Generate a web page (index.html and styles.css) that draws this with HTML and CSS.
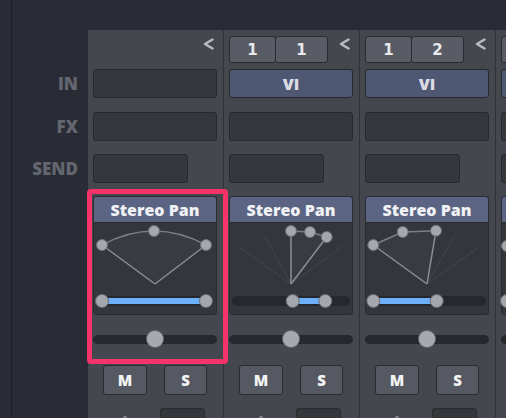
FILE: index.html
```html
<!DOCTYPE html>
<html>
<head>
<meta charset="utf-8">
<link rel="stylesheet" href="styles.css">
</head>
<body>
<div class="app">
  <div class="rail"></div>
  <div class="labels">
    <div class="lab lab-in">IN</div>
    <div class="lab lab-fx">FX</div>
    <div class="lab lab-send">SEND</div>
  </div>
  <div class="strips">
    <!-- channel 1 -->
    <div class="strip strip-sel">
      <div class="top">
        <svg class="chev" width="11" height="12" viewBox="0 0 11 12"><polyline points="9.5,1.5 2,6 9.5,10.5"/></svg>
      </div>
      <div class="slot slot-in"></div>
      <div class="slot slot-fx"></div>
      <div class="slot slot-send"></div>
      <div class="pan-head">Stereo Pan</div>
      <div class="pan-panel">
        <svg class="pan-svg" width="124" height="93" viewBox="0 0 124 93">
          <g class="fan"><line x1="62" y1="62" x2="9" y2="23"/><line x1="62" y1="62" x2="35" y2="12.5"/><line x1="62" y1="62" x2="61" y2="9"/><line x1="62" y1="62" x2="87" y2="12.5"/><line x1="62" y1="62" x2="113" y2="23"/></g>
          <path class="sector" d="M62 62 L9 23 Q61 -5 113 23 Z"/>
          <path class="arc" d="M9 23 Q61 -5 113 23"/>
          <line class="edge" x1="62" y1="62" x2="9" y2="23"/>
          <line class="edge" x1="62" y1="62" x2="113" y2="23"/>
          <rect class="wtrack" x="3" y="74" width="118" height="10" rx="5"/>
          <rect class="wbar" x="9" y="76" width="104" height="6"/>
          <circle class="node" cx="9" cy="23" r="5.5"/>
          <circle class="node" cx="61" cy="9" r="5.5"/>
          <circle class="node" cx="113" cy="23" r="5.5"/>
          <circle class="wknob" cx="9" cy="79" r="6.5"/>
          <circle class="wknob" cx="113" cy="79" r="6.5"/>
        </svg>
      </div>
      <div class="pan"><div class="track"><div class="knob"></div></div></div>
      <div class="ms"><div class="btn btn-m">M</div><div class="btn btn-s">S</div></div>
      <div class="foot"><div class="foot-dot"></div><div class="foot-box"></div></div>
      <div class="frame"></div>
    </div>
    <!-- channel 2 -->
    <div class="strip">
      <div class="top">
        <div class="seg-group"><div class="seg seg-a">1</div><div class="seg seg-b">1</div></div>
        <svg class="chev" width="11" height="12" viewBox="0 0 11 12"><polyline points="9.5,1.5 2,6 9.5,10.5"/></svg>
      </div>
      <div class="slot slot-in slot-vi">VI</div>
      <div class="slot slot-fx"></div>
      <div class="slot slot-send"></div>
      <div class="pan-head">Stereo Pan</div>
      <div class="pan-panel">
        <svg class="pan-svg" width="124" height="93" viewBox="0 0 124 93">
          <g class="fan"><line x1="62" y1="62" x2="9" y2="24"/><line x1="62" y1="62" x2="35" y2="13"/><line x1="62" y1="62" x2="61" y2="9"/><line x1="62" y1="62" x2="88" y2="13"/><line x1="62" y1="62" x2="114" y2="24"/></g>
          <path class="sector" d="M62 62 L62 9 L81 10 L97.7 15 Z"/>
          <polyline class="arc" points="62,9 81,10 97.7,15"/>
          <line class="edge" x1="62" y1="62" x2="62" y2="9"/>
          <line class="edge" x1="62" y1="62" x2="97.7" y2="15"/>
          <rect class="wtrack" x="3" y="74" width="118" height="10" rx="5"/>
          <rect class="wbar" x="63.7" y="76" width="32.6" height="6"/>
          <circle class="node" cx="62" cy="9" r="5.5"/>
          <circle class="node" cx="81" cy="10" r="5.5"/>
          <circle class="node" cx="97.7" cy="15" r="5.5"/>
          <circle class="wknob" cx="63.7" cy="79" r="6.5"/>
          <circle class="wknob" cx="96.3" cy="79" r="6.5"/>
        </svg>
      </div>
      <div class="pan"><div class="track"><div class="knob"></div></div></div>
      <div class="ms"><div class="btn btn-m">M</div><div class="btn btn-s">S</div></div>
      <div class="foot"><div class="foot-dot"></div><div class="foot-box"></div></div>
    </div>
    <!-- channel 3 -->
    <div class="strip">
      <div class="top">
        <div class="seg-group"><div class="seg seg-a">1</div><div class="seg seg-b">2</div></div>
        <svg class="chev" width="11" height="12" viewBox="0 0 11 12"><polyline points="9.5,1.5 2,6 9.5,10.5"/></svg>
      </div>
      <div class="slot slot-in slot-vi">VI</div>
      <div class="slot slot-fx"></div>
      <div class="slot slot-send"></div>
      <div class="pan-head">Stereo Pan</div>
      <div class="pan-panel">
        <svg class="pan-svg" width="124" height="93" viewBox="0 0 124 93">
          <g class="fan"><line x1="62" y1="62" x2="9" y2="24"/><line x1="62" y1="62" x2="35" y2="13"/><line x1="62" y1="62" x2="61" y2="9"/><line x1="62" y1="62" x2="90" y2="13"/><line x1="62" y1="62" x2="114" y2="25"/></g>
          <path class="sector" d="M62 62 L8.3 23 L37.7 10 L71 8.7 Z"/>
          <polyline class="arc" points="8.3,23 37.7,10 71,8.7"/>
          <line class="edge" x1="62" y1="62" x2="8.3" y2="23"/>
          <line class="edge" x1="62" y1="62" x2="71" y2="8.7"/>
          <rect class="wtrack" x="3" y="74" width="118" height="10" rx="5"/>
          <rect class="wbar" x="8.3" y="76" width="63.4" height="6"/>
          <circle class="node" cx="8.3" cy="23" r="5.5"/>
          <circle class="node" cx="37.7" cy="10" r="5.5"/>
          <circle class="node" cx="71" cy="8.7" r="5.5"/>
          <circle class="wknob" cx="8.3" cy="79" r="6.5"/>
          <circle class="wknob" cx="71.7" cy="79" r="6.5"/>
        </svg>
      </div>
      <div class="pan"><div class="track"><div class="knob"></div></div></div>
      <div class="ms"><div class="btn btn-m">M</div><div class="btn btn-s">S</div></div>
      <div class="foot"><div class="foot-dot"></div><div class="foot-box"></div></div>
    </div>
    <!-- channel 4 (clipped at the right edge) -->
    <div class="strip">
      <div class="top">
        <div class="seg-group"><div class="seg seg-a"></div><div class="seg seg-b"></div></div>
      </div>
      <div class="slot slot-in slot-vi"></div>
      <div class="slot slot-fx"></div>
      <div class="slot slot-send"></div>
      <div class="pan-head"></div>
      <div class="pan-panel">
        <svg class="pan-svg" width="124" height="93" viewBox="0 0 124 93">
          <g class="fan"><line x1="62" y1="62" x2="9" y2="24"/><line x1="62" y1="62" x2="35" y2="13"/><line x1="62" y1="62" x2="61" y2="9"/></g>
          <path class="sector" d="M62 62 L6 24 L40 10 L75 9 Z"/>
          <polyline class="arc" points="6,24 40,10 75,9"/>
          <line class="edge" x1="62" y1="62" x2="6" y2="24"/>
          <rect class="wtrack" x="3" y="74" width="118" height="10" rx="5"/>
          <rect class="wbar" x="6" y="76" width="69" height="6"/>
          <circle class="node" cx="6" cy="24" r="5.5"/>
          <circle class="wknob" cx="6" cy="79" r="6.5"/>
        </svg>
      </div>
      <div class="pan"><div class="track"></div></div>
      <div class="ms"><div class="btn btn-m"></div><div class="btn btn-s"></div></div>
      <div class="foot"></div>
    </div>
  </div>
</div>
</body>
</html>
```
FILE: styles.css
```css
html, body {
  margin: 0;
  padding: 0;
}
body {
  width: 506px;
  height: 418px;
  overflow: hidden;
  background: #292c35;
  font-family: "Open Sans", "DejaVu Sans", sans-serif;
}
.app {
  display: flex;
  height: 418px;
}
.rail {
  width: 11px;
  flex-shrink: 0;
  border-right: 1px solid #1f2128;
}
.labels {
  width: 76px;
  flex-shrink: 0;
  box-sizing: border-box;
  padding: 69px 10px 0 0;
  display: flex;
  flex-direction: column;
  align-items: flex-end;
}
.lab {
  height: 29px;
  line-height: 29px;
  font-weight: 800;
  font-size: 17px;
  color: #64666f;
}
.lab-fx { margin-top: 14px; }
.lab-send { margin-top: 13px; }

.strips {
  display: flex;
  gap: 1px;
  margin-top: 30px;
  background: #2f3139;
  flex-shrink: 0;
  height: 388px;
}
.strip {
  width: 135px;
  flex-shrink: 0;
  box-sizing: border-box;
  padding: 6px 6px 0 5px;
  background: #45474e;
  display: flex;
  flex-direction: column;
  position: relative;
}
.strip-sel {
  z-index: 2;
}
.strip > * {
  flex-shrink: 0;
}
.top {
  height: 27px;
  display: flex;
}
.chev {
  margin-left: auto;
  margin-right: 3px;
  margin-top: 2px;
  fill: none;
  stroke: #babcc4;
  stroke-width: 2.4;
  stroke-linecap: round;
  stroke-linejoin: round;
}
.seg-group {
  display: flex;
}
.seg {
  height: 27px;
  box-sizing: border-box;
  border: 1px solid #2a2b30;
  border-radius: 3px;
  background: #5a5c65;
  color: #e8e9ec;
  font-family: "DejaVu Sans", sans-serif;
  font-weight: 700;
  font-size: 15px;
  display: flex;
  align-items: center;
  justify-content: center;
}
.seg-a { width: 47px; }
.seg-b { width: 53px; margin-left: -1px; }

.slot {
  height: 29px;
  box-sizing: border-box;
  border: 1px solid #28292d;
  border-radius: 3px;
  background: #36373c;
}
.slot-in { margin-top: 6px; }
.slot-fx { margin-top: 14px; }
.slot-send { margin-top: 13px; width: 95px; }
.slot-vi {
  background: #4f5872;
  color: #dadde5;
  font-weight: 800;
  font-size: 16px;
  display: flex;
  align-items: center;
  justify-content: center;
}

.pan-head {
  margin-top: 13px;
  height: 26px;
  box-sizing: border-box;
  background: #5b6482;
  border: 1px solid #2b2d33;
  border-bottom: none;
  border-radius: 3px 3px 0 0;
  color: #eff1f5;
  font-weight: 800;
  font-size: 16px;
  display: flex;
  align-items: center;
  justify-content: center;
}
.pan-panel {
  height: 93px;
  box-sizing: border-box;
  background: #35363b;
  border: 1px solid #2a2b2f;
  border-radius: 0 0 3px 3px;
}
.pan-svg {
  display: block;
  margin: -1px;
  overflow: visible;
}
.fan line {
  stroke: #43454c;
  stroke-width: 1;
}
.sector {
  fill: #3a3b41;
}
.arc {
  fill: none;
  stroke: #7d7f87;
  stroke-width: 1.5;
}
.edge {
  stroke: #8b8d95;
  stroke-width: 1.5;
}
.wtrack {
  fill: #27282d;
}
.wbar {
  fill: #6cb0fa;
}
.node, .wknob {
  fill: #a6a7ac;
  stroke: #6c6d73;
  stroke-width: 1;
}

.pan {
  margin-top: 16px;
  height: 16px;
  display: flex;
  align-items: center;
}
.track {
  flex: 1;
  height: 9px;
  border-radius: 5px;
  background: #27282d;
  display: flex;
  justify-content: center;
  align-items: center;
}
.knob {
  width: 16px;
  height: 16px;
  flex-shrink: 0;
  border-radius: 50%;
  background: #a8a9ae;
  box-shadow: 0 0 0 1px #6c6d73;
}

.ms {
  margin-top: 18px;
  display: flex;
  padding-left: 10px;
  gap: 17px;
}
.btn {
  width: 44px;
  height: 30px;
  box-sizing: border-box;
  border: 1px solid #2b2c31;
  border-radius: 3px;
  background: #575962;
  color: #f2f3f5;
  font-weight: 800;
  font-size: 15px;
  display: flex;
  align-items: center;
  justify-content: center;
}
.btn-s { width: 43px; }

.foot {
  margin-top: 13px;
  height: 20px;
  display: flex;
}
.foot-dot {
  width: 4px;
  height: 4px;
  border-radius: 50%;
  background: #8d8f96;
  margin: 8px 0 0 30px;
}
.foot-box {
  width: 45px;
  height: 20px;
  box-sizing: border-box;
  margin-left: 33px;
  background: #36373c;
  border: 1px solid #2a2b2f;
  border-radius: 3px;
}

.frame {
  position: absolute;
  left: -1px;
  top: 159px;
  width: 141px;
  height: 175px;
  box-sizing: border-box;
  border: 5px solid #f5336b;
  border-radius: 4px;
  z-index: 3;
}
```
